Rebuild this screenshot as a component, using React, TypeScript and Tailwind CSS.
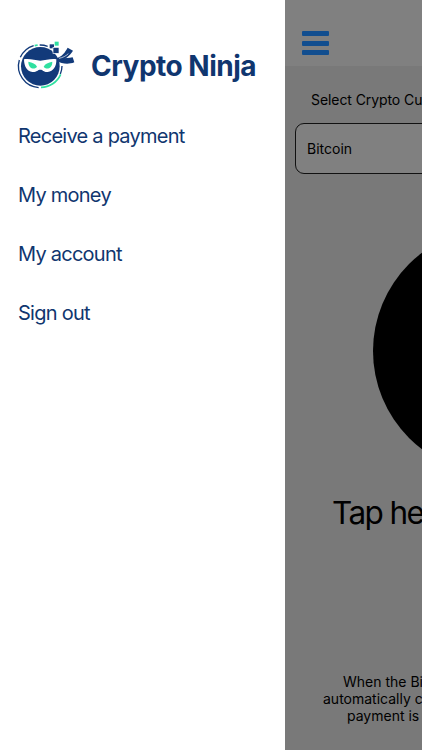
import React from "react";

const menuItems = ["Receive a payment", "My money", "My account", "Sign out"];

function NinjaLogo() {
  return (
    <svg viewBox="0 0 210 180" className="w-[70px] h-[60px] shrink-0" fill="none">
      <circle cx="91" cy="94" r="58" fill="#123a7a" />
      <path d="M86 158 A65 65 0 0 1 28 75 M31 67 A65 65 0 0 1 71 32 M89 30 A65 65 0 0 1 113 34" stroke="#123a7a" strokeWidth="4" />
      <path d="M156 93 A65 65 0 0 1 151 117" stroke="#123a7a" strokeWidth="4" />
      <path d="M152 118 A65 65 0 0 1 93 157" stroke="#2fe0a0" strokeWidth="5" />
      <path d="M74 32 L83 30" stroke="#2fe0a0" strokeWidth="5" />
      <path
        d="M42 73 C60 70 76 77 91 77 C106 77 122 70 139 73 C140 94 130 110 113 111 C101 112 99 104 91 104 C83 104 80 112 67 111 C51 109 42 94 42 73 Z"
        fill="#fff"
      />
      <path d="M55 80 C67 82 77 86 81 95 C76 104 55 104 55 80 Z" fill="#2fe0a0" />
      <path d="M127 80 C115 82 105 86 101 95 C106 104 127 104 127 80 Z" fill="#2fe0a0" />
      <path d="M139 70 C157 64 165 52 173 38 L189 47 C180 61 165 74 149 78 Z" fill="#123a7a" />
      <path d="M142 70 C158 72 174 69 188 67 L193 82 C174 90 154 86 142 78 Z" fill="#123a7a" />
      <path d="M147 70 C158 68 168 63 175 56" stroke="#fff" strokeWidth="2" />
      <rect x="119" y="28" width="13" height="12" fill="#123a7a" />
      <rect x="134" y="20" width="12" height="12" fill="#2fe0a0" />
      <rect x="129" y="37" width="18" height="18" fill="#123a7a" stroke="#fff" strokeWidth="2" />
    </svg>
  );
}

function Drawer() {
  return (
    <aside className="w-[285px] shrink-0 bg-white text-[#10366f]">
      <div className="flex items-center pl-[10px] pt-[35px]">
        <NinjaLogo />
        <h1 className="ml-[11px] mt-[2px] whitespace-nowrap text-[28px] leading-[34px] font-bold tracking-[-0.5px]">
          Crypto Ninja
        </h1>
      </div>
      <nav className="mt-[26px] flex flex-col gap-[29px] pl-[18px]">
        {menuItems.map((item) => (
          <a key={item} className="whitespace-nowrap text-[20px] leading-[30px] tracking-[-0.75px]">
            {item}
          </a>
        ))}
      </nav>
    </aside>
  );
}

function PaymentScreen() {
  return (
    <main className="flex flex-1 min-w-0 flex-col overflow-hidden bg-[#797979] text-black">
      <header className="h-[66px] shrink-0 bg-[#808080] pl-[17px] pt-[31px]">
        <div className="flex w-[27px] flex-col gap-[4.5px]">
          <span className="h-[5px] rounded-[1px] bg-[#124e8f]" />
          <span className="h-[5px] rounded-[1px] bg-[#124e8f]" />
          <span className="h-[5px] rounded-[1px] bg-[#124e8f]" />
        </div>
      </header>
      <p className="mt-[24px] pl-[26px] whitespace-nowrap text-[14px] leading-5 tracking-[-0.08px]">Select Crypto Cu</p>
      <div className="ml-[10px] mt-[13px] flex h-[51px] w-[400px] shrink-0 items-center rounded-[9px] border border-[#111] bg-[#808080] pb-px pl-[11px] text-[14px]">
        Bitcoin
      </div>
      <div className="ml-[87.5px] mt-[53.5px] size-[246px] shrink-0 rounded-full bg-black" />
      <p className="mt-[19.4px] pl-[47px] whitespace-nowrap text-[31.5px] leading-[40px] tracking-[-1.6px]">Tap he</p>
      <div className="mt-[140.1px] whitespace-nowrap text-[14px] leading-[17px]">
        <p className="pl-[58px]">When the Bi</p>
        <p className="pl-[38px]">automatically c</p>
        <p className="pl-[62px]">payment is</p>
      </div>
    </main>
  );
}

export default function App() {
  return (
    <div className="flex h-[750px] w-[422px] overflow-hidden font-['Inter',sans-serif]">
      <Drawer />
      <PaymentScreen />
    </div>
  );
}
